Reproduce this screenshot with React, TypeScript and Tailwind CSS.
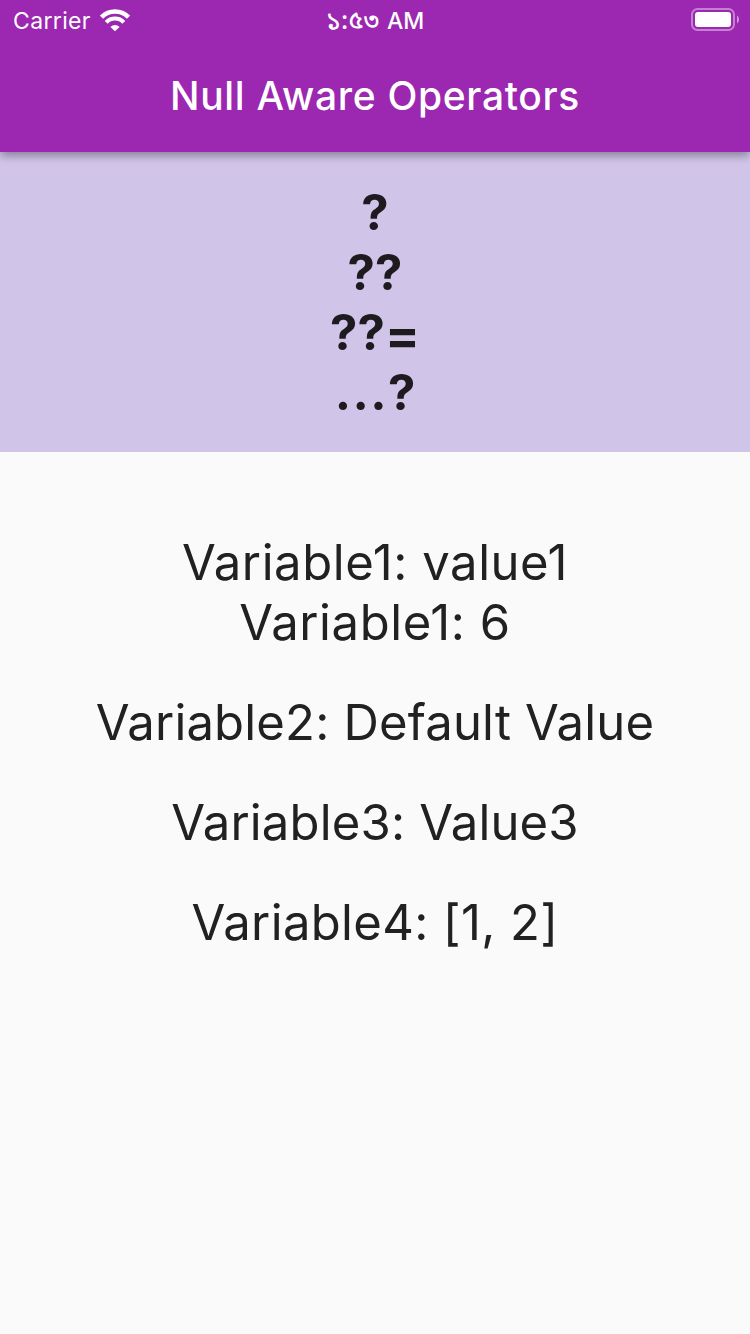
import React from "react";

const values = [
  { text: "Variable2: Default Value", spacing: "tracking-[0.18px]" },
  { text: "Variable3: Value3", spacing: "tracking-[0.18px]" },
  { text: "Variable4: [1, 2]", spacing: "tracking-[0.35px]" },
];

function WifiIcon() {
  return (
    <svg className="block h-[23px] w-[30px]" viewBox="0 0 30 23" fill="none" stroke="#fff">
      <path d="M1.5 8.2A19 19 0 0 1 28.5 8.2" strokeWidth="4.6" />
      <path d="M6.2 13.3A12.2 12.2 0 0 1 23.8 13.3" strokeWidth="4.1" />
      <path d="M15 22.3L10.4 18A6.4 6.4 0 0 1 19.6 18Z" fill="#fff" stroke="none" />
    </svg>
  );
}

function BatteryIcon() {
  return (
    <svg className="block h-[24px] w-[48px]" viewBox="0 0 48 24">
      <rect x="1" y="1" width="42" height="21" rx="5.5" fill="none" stroke="#fff" strokeOpacity=".42" strokeWidth="2" />
      <rect x="4" y="4" width="36" height="15" rx="3" fill="#fff" />
      <path d="M46 7.5C48.7 9 48.7 14 46 15.5Z" fill="#fff" fillOpacity=".5" />
    </svg>
  );
}

function StatusBar() {
  return (
    <div className="grid h-10 grid-cols-3 grid-rows-[40px] items-center text-white">
      <div className="flex items-center gap-[9px] pl-[13px]">
        <span className="pt-[2px] text-[23px] leading-[38px] tracking-[0.35px]">Carrier</span>
        <WifiIcon />
      </div>
      <div className="flex items-baseline justify-center gap-[8px] text-[23px] font-medium leading-[38px] whitespace-nowrap">
        <span className="text-[25.5px]">১:৫৩</span>
        <span>AM</span>
      </div>
      <div className="flex justify-end pr-[11px]">
        <BatteryIcon />
      </div>
    </div>
  );
}

export default function App() {
  return (
    <div className="flex h-[1334px] w-[750px] flex-col overflow-hidden bg-[#fafafa] font-['Inter','Noto_Sans_Bengali',sans-serif] text-[#212121]">
      <header className="relative z-10 h-[152px] bg-[#9c27b0] shadow-[0_4px_8px_-2px_rgba(0,0,0,0.2),0_6px_8px_rgba(0,0,0,0.12),0_2px_10px_rgba(0,0,0,0.08)]">
        <StatusBar />
        <h1 className="text-center text-[39px] font-medium leading-[112px] tracking-[0.66px] text-white">Null Aware Operators</h1>
      </header>
      <section className="h-[300px] bg-[#d1c4e9] pt-[31px] text-center text-[49px] font-bold leading-[60px] text-[#1d1a20]">
        <div>?</div>
        <div>??</div>
        <div>
          ??<span className="inline-block translate-y-[3px] text-[51.5px] leading-none">=</span>
        </div>
        <div>
          <span className="tracking-[1.4px]">...</span>?
        </div>
      </section>
      <main className="flex flex-col gap-10 pt-[81px] text-center text-[49px] leading-[60px]">
        <div className="tracking-[0.57px]">
          <p>Variable1: value1</p>
          <p>Variable1: 6</p>
        </div>
        {values.map(({ text, spacing }) => (
          <p key={text} className={spacing}>{text}</p>
        ))}
      </main>
    </div>
  );
}
